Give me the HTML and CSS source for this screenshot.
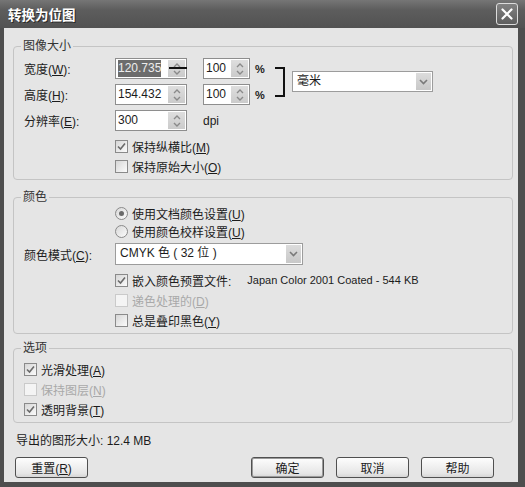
FILE: index.html
```html
<!DOCTYPE html>
<html lang="zh-CN">
<head>
    <meta charset="UTF-8">
    <meta name="viewport" content="width=device-width, initial-scale=1.0">
    <title>转换为位图</title>
    <link rel="stylesheet" href="styles.css">
</head>
<body>
<div class="window">
    <div class="titlebar">
        <span class="title">转换为位图</span>
        <button class="close-btn" type="button">
            <svg width="12" height="12" viewBox="0 0 12 12"><path d="M1.5 1.5 L10.5 10.5 M10.5 1.5 L1.5 10.5" stroke="#fff" stroke-width="2.2" stroke-linecap="round"/></svg>
        </button>
    </div>

    <div class="client">
        <!-- 图像大小 -->
        <fieldset class="group group-size">
            <legend>图像大小</legend>
            <div class="size-grid">
                <span class="bracket"></span>
                <div class="select select-unit">
                    <span class="select-text">毫米</span>
                    <span class="select-btn"><svg width="9" height="6" viewBox="0 0 9 6"><path d="M1 1 L4.5 4.5 L8 1" fill="none" stroke="#7a7a7a" stroke-width="1.6"/></svg></span>
                </div>

                <span class="field-label">宽度(<u>W</u>):</span>
                <div class="spin col-main">
                    <span class="spin-text"><span class="selected">120.735</span></span>
                    <span class="spin-btn">
                        <svg width="8" height="5" viewBox="0 0 8 5"><path d="M1 4 L4 1 L7 4" fill="none" stroke="#8a8a8a" stroke-width="1.4"/></svg>
                        <svg width="8" height="5" viewBox="0 0 8 5"><path d="M1 1 L4 4 L7 1" fill="none" stroke="#8a8a8a" stroke-width="1.4"/></svg>
                        <span class="cursor-line"></span>
                    </span>
                </div>
                <div class="spin col-pct">
                    <span class="spin-text">100</span>
                    <span class="spin-btn">
                        <svg width="8" height="5" viewBox="0 0 8 5"><path d="M1 4 L4 1 L7 4" fill="none" stroke="#8a8a8a" stroke-width="1.4"/></svg>
                        <svg width="8" height="5" viewBox="0 0 8 5"><path d="M1 1 L4 4 L7 1" fill="none" stroke="#8a8a8a" stroke-width="1.4"/></svg>
                    </span>
                </div>
                <span class="pct">%</span>

                <span class="field-label">高度(<u>H</u>):</span>
                <div class="spin col-main">
                    <span class="spin-text">154.432</span>
                    <span class="spin-btn">
                        <svg width="8" height="5" viewBox="0 0 8 5"><path d="M1 4 L4 1 L7 4" fill="none" stroke="#8a8a8a" stroke-width="1.4"/></svg>
                        <svg width="8" height="5" viewBox="0 0 8 5"><path d="M1 1 L4 4 L7 1" fill="none" stroke="#8a8a8a" stroke-width="1.4"/></svg>
                    </span>
                </div>
                <div class="spin col-pct">
                    <span class="spin-text">100</span>
                    <span class="spin-btn">
                        <svg width="8" height="5" viewBox="0 0 8 5"><path d="M1 4 L4 1 L7 4" fill="none" stroke="#8a8a8a" stroke-width="1.4"/></svg>
                        <svg width="8" height="5" viewBox="0 0 8 5"><path d="M1 1 L4 4 L7 1" fill="none" stroke="#8a8a8a" stroke-width="1.4"/></svg>
                    </span>
                </div>
                <span class="pct">%</span>

                <span class="field-label">分辨率(<u>E</u>):</span>
                <div class="spin col-main">
                    <span class="spin-text">300</span>
                    <span class="spin-btn">
                        <svg width="8" height="5" viewBox="0 0 8 5"><path d="M1 4 L4 1 L7 4" fill="none" stroke="#8a8a8a" stroke-width="1.4"/></svg>
                        <svg width="8" height="5" viewBox="0 0 8 5"><path d="M1 1 L4 4 L7 1" fill="none" stroke="#8a8a8a" stroke-width="1.4"/></svg>
                    </span>
                </div>
                <span class="unit col-pct">dpi</span>
            </div>

            <div class="indent first-check">
                <div class="check-row">
                    <span class="checkbox"><svg width="11" height="11" viewBox="0 0 11 11"><path d="M2 5.5 L4.5 8 L9 2.5" fill="none" stroke="#6a6a6a" stroke-width="1.6"/></svg></span>
                    <span>保持纵横比(<u>M</u>)</span>
                </div>
                <div class="check-row">
                    <span class="checkbox"></span>
                    <span>保持原始大小(<u>O</u>)</span>
                </div>
            </div>
        </fieldset>

        <!-- 颜色 -->
        <fieldset class="group group-color">
            <legend>颜色</legend>
            <div class="indent">
                <div class="radio-row radio-first">
                    <span class="radio checked"></span>
                    <span>使用文档颜色设置(<u>U</u>)</span>
                </div>
                <div class="radio-row radio-second">
                    <span class="radio"></span>
                    <span>使用颜色校样设置(<u>U</u>)</span>
                </div>
            </div>
            <div class="mode-row">
                <span class="mode-label">颜色模式(<u>C</u>):</span>
                <div class="select select-mode">
                    <span class="select-text">CMYK 色 ( 32 位 )</span>
                    <span class="select-btn"><svg width="9" height="6" viewBox="0 0 9 6"><path d="M1 1 L4.5 4.5 L8 1" fill="none" stroke="#7a7a7a" stroke-width="1.6"/></svg></span>
                </div>
            </div>
            <div class="indent first-check">
                <div class="check-row">
                    <span class="checkbox"><svg width="11" height="11" viewBox="0 0 11 11"><path d="M2 5.5 L4.5 8 L9 2.5" fill="none" stroke="#6a6a6a" stroke-width="1.6"/></svg></span>
                    <span>嵌入颜色预置文件:</span>
                    <span class="profile">Japan Color 2001 Coated - 544 KB</span>
                </div>
                <div class="check-row disabled">
                    <span class="checkbox"></span>
                    <span>递色处理的(<u>D</u>)</span>
                </div>
                <div class="check-row">
                    <span class="checkbox"></span>
                    <span>总是叠印黑色(<u>Y</u>)</span>
                </div>
            </div>
        </fieldset>

        <!-- 选项 -->
        <fieldset class="group group-options">
            <legend>选项</legend>
            <div class="check-row">
                <span class="checkbox"><svg width="11" height="11" viewBox="0 0 11 11"><path d="M2 5.5 L4.5 8 L9 2.5" fill="none" stroke="#6a6a6a" stroke-width="1.6"/></svg></span>
                <span>光滑处理(<u>A</u>)</span>
            </div>
            <div class="check-row disabled">
                <span class="checkbox"></span>
                <span>保持图层(<u>N</u>)</span>
            </div>
            <div class="check-row">
                <span class="checkbox"><svg width="11" height="11" viewBox="0 0 11 11"><path d="M2 5.5 L4.5 8 L9 2.5" fill="none" stroke="#6a6a6a" stroke-width="1.6"/></svg></span>
                <span>透明背景(<u>T</u>)</span>
            </div>
        </fieldset>

        <div class="export-size">导出的图形大小: 12.4 MB</div>

        <div class="button-row">
            <button class="btn" type="button">重置(<u>R</u>)</button>
            <span class="spacer"></span>
            <button class="btn btn-default" type="button">确定</button>
            <button class="btn" type="button">取消</button>
            <button class="btn" type="button">帮助</button>
        </div>
    </div>
</div>
</body>
</html>
```

FILE: styles.css
```css
body {
    margin: 0;
    background-color: #4c4c4c;
    font-family: "Liberation Sans", "Noto Sans CJK SC", sans-serif;
    font-size: 12px;
    color: #1c1c1c;
}
.window {
    width: 525px;
    height: 487px;
    display: flex;
    flex-direction: column;
    background-color: #4e4e4e;
}
/* Title bar */
.titlebar {
    height: 28px;
    flex-shrink: 0;
    display: flex;
    align-items: center;
    justify-content: space-between;
    padding: 0 7px 0 8px;
    box-sizing: border-box;
    background: linear-gradient(#767676, #5d5d5d 35%, #525252);
}
.title {
    color: #fff;
    font-family: "Noto Sans CJK SC", sans-serif;
    font-weight: bold;
    font-size: 13.5px;
    text-shadow: 1px 1px 0 #2a2a2a;
}
.close-btn {
    width: 22px;
    height: 22px;
    padding: 0;
    border: 1px solid #dcdcdc;
    border-radius: 3px;
    background: linear-gradient(#828282, #5e5e5e);
    display: flex;
    align-items: center;
    justify-content: center;
}
/* Client area */
.client {
    flex: 1;
    margin: 0 7px 5px 4px;
    padding: 10px 5px 0 9px;
    background-color: #e5e5e5;
    display: flex;
    flex-direction: column;
}
u {
    text-decoration: underline;
    text-underline-offset: 1px;
}
.group {
    margin: 0;
    padding: 4px 10px 3px;
    border: 1px solid #c4c4c4;
    border-radius: 4px;
    min-width: 0;
}
.group legend {
    margin-left: -3px;
    padding: 0 2px;
    line-height: 16px;
    color: #333;
}
.group-color {
    margin-top: 9px;
    padding-top: 0;
}
.group-options {
    margin-top: 6px;
    padding-top: 3px;
}
/* Size grid */
.size-grid {
    display: grid;
    grid-template-columns: 91px 72px 16px 47px 25px 17px 141px;
    grid-template-rows: 21px 21px 21px;
    row-gap: 5px;
}
.field-label {
    grid-column: 1;
    align-self: center;
}
.col-main {
    grid-column: 2;
}
.col-pct {
    grid-column: 4;
}
.pct {
    grid-column: 5;
    align-self: center;
    padding-left: 5px;
    font-size: 11px;
    font-weight: bold;
}
.unit {
    align-self: center;
}
.bracket {
    grid-column: 6;
    grid-row: 1 / 3;
    align-self: center;
    width: 10px;
    height: 30px;
    box-sizing: border-box;
    border: 2px solid #111;
    border-left: none;
}
.select-unit {
    grid-column: 7;
    grid-row: 1 / 3;
    align-self: center;
}
/* Spin box */
.spin {
    display: flex;
    height: 21px;
    box-sizing: border-box;
    border: 1px solid #8e8e8e;
    background-color: #fff;
}
.spin-text {
    flex: 1;
    padding-left: 2px;
    line-height: 19px;
    white-space: nowrap;
}
.selected {
    display: inline-block;
    line-height: 17px;
    background-color: #6c6c6c;
    color: #ececec;
}
.spin-btn {
    position: relative;
    width: 17px;
    margin: 1px;
    background: linear-gradient(#dedede, #cbcbcb);
    display: flex;
    flex-direction: column;
    align-items: center;
    justify-content: center;
    gap: 2px;
}
.cursor-line {
    position: absolute;
    left: 1px;
    right: -2px;
    top: 7px;
    height: 2px;
    background-color: #111;
}
/* Dropdown */
.select {
    display: flex;
    height: 21px;
    box-sizing: border-box;
    border: 1px solid #9c9c9c;
    background-color: #fff;
}
.select-text {
    flex: 1;
    padding-left: 4px;
    line-height: 19px;
    white-space: nowrap;
}
.select-btn {
    width: 15px;
    margin: 1px;
    background: linear-gradient(#dcdcdc, #c8c8c8);
    display: flex;
    align-items: center;
    justify-content: center;
}
/* Check and radio rows */
.indent {
    margin-left: 91px;
}
.first-check {
    margin-top: 5px;
}
.check-row, .radio-row {
    display: flex;
    align-items: center;
    height: 20px;
    white-space: nowrap;
}
.radio-first {
    height: 17px;
}
.radio-second {
    height: 19px;
}
.checkbox {
    width: 13px;
    height: 13px;
    box-sizing: border-box;
    margin-right: 4px;
    border: 1px solid #8a8a8a;
    background: linear-gradient(135deg, #d6d6d6, #fbfbfb);
    display: flex;
    align-items: center;
    justify-content: center;
}
.disabled {
    color: #a9a9a9;
}
.disabled .checkbox {
    border-color: #cacaca;
    background: #f4f4f4;
}
.radio {
    width: 13px;
    height: 13px;
    box-sizing: border-box;
    margin-right: 4px;
    border: 1px solid #8a8a8a;
    border-radius: 50%;
    background: linear-gradient(135deg, #d8d8d8, #fbfbfb);
    display: flex;
    align-items: center;
    justify-content: center;
}
.radio.checked::after {
    content: "";
    width: 5px;
    height: 5px;
    border-radius: 50%;
    background-color: #6a6a6a;
}
.profile {
    margin-left: 16px;
    font-size: 11px;
}
.mode-row {
    display: flex;
    align-items: center;
    margin-top: 2px;
    height: 22px;
}
.mode-label {
    width: 91px;
}
.select-mode {
    width: 188px;
    height: 22px;
}
/* Footer */
.export-size {
    margin-top: 10px;
    padding-left: 3px;
    line-height: 16px;
}
.button-row {
    display: flex;
    gap: 12px;
    margin: 8px 19px 0 2px;
}
.spacer {
    flex: 1;
}
.btn {
    width: 73px;
    height: 21px;
    padding: 0;
    border: 1px solid #505050;
    border-radius: 3px;
    background: linear-gradient(#fdfdfd, #e6e6e6 80%, #d6d6d6);
    font-family: "Liberation Sans", "Noto Sans CJK SC", sans-serif;
    font-size: 12px;
    color: #1c1c1c;
}
.btn-default {
    box-shadow: inset 0 0 0 1px #9a9a9a;
}
```
